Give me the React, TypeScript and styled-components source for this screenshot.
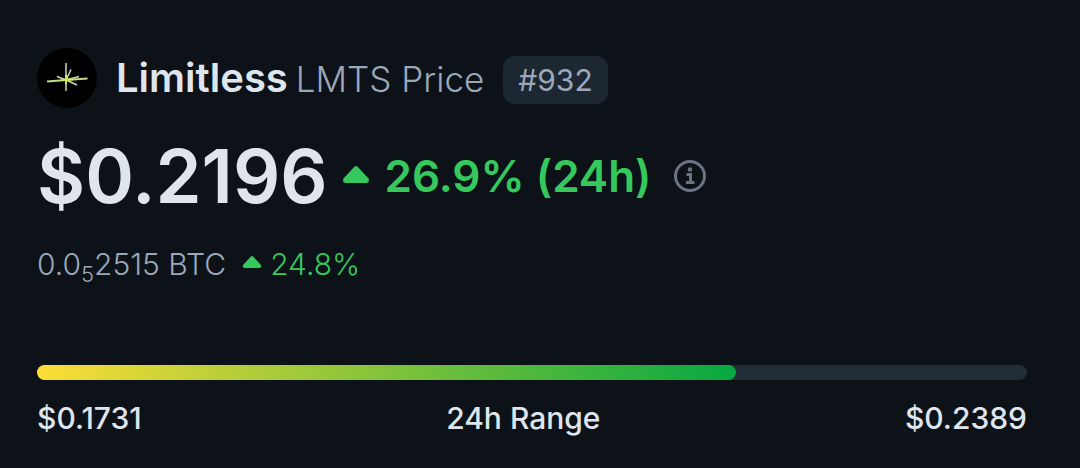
import React from "react";
import styled, { createGlobalStyle } from "styled-components";

const Global = createGlobalStyle`
  * { box-sizing: border-box; }
  body { margin: 0; background: #0d1218; color: #dfe5ec; font-family: Inter, "Liberation Sans", sans-serif; }
`;

const Page = styled.main`
  padding: 48px 53px 32px 37px;
`;

const Row = styled.div<{ $gap: number; $top?: number }>`
  display: flex;
  align-items: center;
  gap: ${(p) => p.$gap}px;
  margin-top: ${(p) => p.$top ?? 0}px;
`;

const Title = styled.h1`
  display: flex;
  align-items: baseline;
  gap: 8px;
  margin: 0;
  font-size: 40px;
  line-height: 60px;
  font-weight: 600;
`;

const Ticker = styled.span`
  color: #9ba8b8;
  font-size: 35px;
  line-height: 40px;
  font-weight: 300;
`;

const Rank = styled.span`
  margin-top: 4px;
  padding: 0 15px;
  border-radius: 12px;
  background: #1c2732;
  color: #9ba8bb;
  font-size: 30px;
  line-height: 48px;
  font-weight: 400;
`;

const Price = styled.span`
  font-size: 74px;
  line-height: 88px;
  font-weight: 600;
`;

const Change = styled.span<{ $large?: boolean }>`
  display: flex;
  align-items: center;
  gap: ${(p) => (p.$large ? 15 : 8)}px;
  color: #35c95d;
  font-size: ${(p) => (p.$large ? 44 : 30)}px;
  line-height: ${(p) => (p.$large ? 52 : 40)}px;
  font-weight: ${(p) => (p.$large ? 600 : 300)};
`;

const CaretIcon = styled.svg`
  margin-bottom: 4px;
`;

const InfoButton = styled.button`
  display: flex;
  margin-left: 8px;
  padding: 0;
  border: 0;
  background: none;
  color: #6b7482;
`;

const Btc = styled.span`
  color: #9ba8b8;
  font-size: 30px;
  line-height: 40px;
  font-weight: 300;
`;

const Sub = styled.sub`
  font-size: 22px;
  line-height: 0;
`;

const Track = styled.div`
  height: 15px;
  margin-top: 81px;
  border-radius: 8px;
  background: #222d37;
`;

const Fill = styled.div`
  height: 100%;
  border-radius: 8px;
  background: linear-gradient(90deg, #fddd36, #06a840);
`;

const Range = styled.div`
  display: flex;
  justify-content: space-between;
  margin-top: 20px;
  font-size: 30px;
  line-height: 36px;
  font-weight: 500;
`;

const Logo = () => (
  <svg width="60" height="60" viewBox="0 0 60 60" aria-hidden="true">
    <circle cx="30" cy="30" r="30" fill="#000" />
    <g fill="none" stroke="#ced8ae" strokeWidth="1.5">
      <path d="M29 15V43M34 21.500L29 32M20 28.500L29 32L40 37M29 32L42 28.500" />
      <path d="M10 33.500L29 32L50.500 30.500" stroke="#c3d98c" strokeWidth="1.800" />
    </g>
    <path d="M24 32.300L29 31.500L36 31.500M29 27V36" stroke="#c9ef4d" strokeWidth="1.800" fill="none" />
  </svg>
);

const Caret = ({ width, height }: { width: number; height: number }) => (
  <CaretIcon width={width} height={height} viewBox="0 0 28 18" aria-hidden="true">
    <path d="M12 1Q14 -1 16 1L27 13Q29 18 25 18H3Q-1 18 1 13Z" fill="currentColor" />
  </CaretIcon>
);

export default function App() {
  return (
    <>
      <Global />
      <Page>
        <Row $gap={19}>
          <Logo />
          <Title>
            Limitless <Ticker>LMTS Price</Ticker>
          </Title>
          <Rank>#932</Rank>
        </Row>
        <Row $gap={14} $top={24}>
          <Price>$0.2196</Price>
          <Change $large>
            <Caret width={28} height={17} />
            26.9% (24h)
          </Change>
          <InfoButton type="button" aria-label="Price information">
            <svg width="32" height="32" viewBox="0 0 32 32" fill="none" stroke="currentColor">
              <circle cx="16" cy="16" r="14.500" strokeWidth="3" />
              <path d="M12.500 14.500H16.500V22M12 22.500H20.500" strokeWidth="3" />
              <circle cx="16" cy="9.500" r="2.300" fill="currentColor" stroke="none" />
            </svg>
          </InfoButton>
        </Row>
        <Row $gap={16} $top={24}>
          <Btc>
            0.0<Sub>5</Sub>2515 BTC
          </Btc>
          <Change>
            <Caret width={20} height={12} />
            24.8%
          </Change>
        </Row>
        <Track>
          <Fill style={{ width: "70.6%" }} />
        </Track>
        <Range>
          <span>$0.1731</span>
          <span>24h Range</span>
          <span>$0.2389</span>
        </Range>
      </Page>
    </>
  );
}
